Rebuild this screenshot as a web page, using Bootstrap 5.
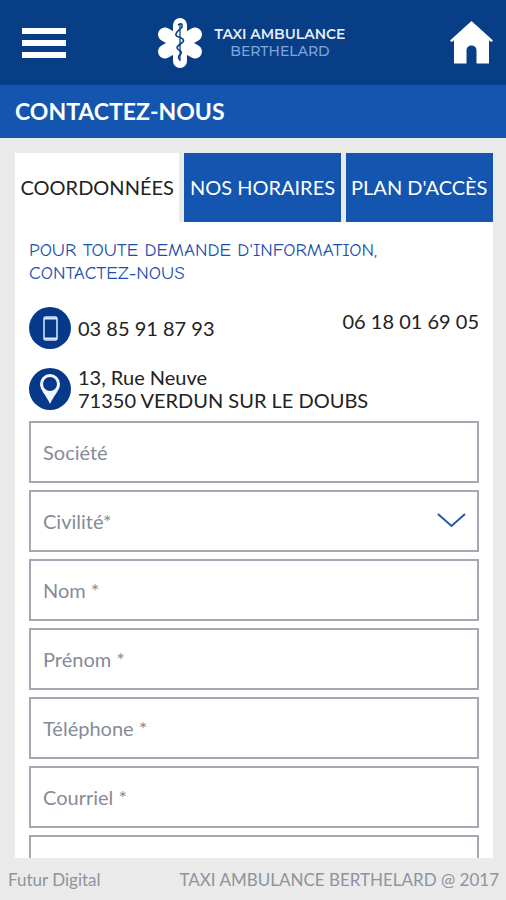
<!DOCTYPE html>
<html lang="fr">
<head>
<meta charset="utf-8">
<meta name="viewport" content="width=device-width, initial-scale=1">
<title>Taxi Ambulance Berthelard - Contactez-nous</title>
<link rel="stylesheet" href="https://cdn.jsdelivr.net/npm/bootstrap@5.3.0/dist/css/bootstrap.min.css">
<style>
:root { --navy: #083e85; --royal: #1455b0; --page: #eaeaea; }
body { font-family: Lato, sans-serif; font-size: 20px; line-height: 23px; color: #222; background: var(--page); }
.topbar { background: var(--navy); padding: 0 13px 0 22px; min-height: 85px; }
.topbar svg, .disc svg { display: block; }
.brand-link { gap: 10px; margin-right: 16px; }
.brand { color: #e6edfb; font-family: Montserrat, "Open Sans", sans-serif; font-size: 14px; font-weight: 600; line-height: 1; }
.brand-line { display: block; line-height: 17px; }
.brand-sub { color: #7da5e0; font-weight: 500; }
.page-title { background: var(--royal); color: #fff; font-size: 23px; font-weight: 700; line-height: 29px; padding: 12px 15px; }
.content { overflow-y: auto; scrollbar-width: none; min-height: 0; padding: 15px 13px 0 15px; }
.content::-webkit-scrollbar { display: none; }
.tabs { background: var(--page); gap: 5px; }
.tab { border: 0; background: var(--royal); color: #fff; font-size: 20px; line-height: 29px; padding: 20px 5px; white-space: nowrap; }
.tab.active { background: #fff; color: #222; }
.panel { padding: 17px 14px; }
.intro { color: #1a4fae; font-family: "Comic Neue", "Patrick Hand", Lato, cursive; font-size: 19px; line-height: 23px; }
.disc { width: 42px; height: 42px; background: #07398a; border-radius: 50%; }
.phones { padding-top: 22px; }
.phone-alt { padding-top: 3px; }
.contact-row { gap: 7px; }
.place { padding: 17px 0 9px; }
.fields { gap: 7px; }
.field { height: 62px; border: 2px solid #a5a7b2; border-radius: 0; font-size: 20px; padding: 0 12px; color: #868b98; background-color: #fff; }
.field::placeholder { color: #868b98; opacity: 1; }
.picker select { appearance: none; background-image: none; }
.picker svg { position: absolute; right: 13px; top: 23px; pointer-events: none; }
.footbar { color: #8f939d; font-size: 17px; line-height: 22px; padding: 11px 7px 9px 8px; }
</style>
<script src="https://cdn.jsdelivr.net/npm/bootstrap@5.3.0/dist/js/bootstrap.bundle.min.js"></script>
</head>
<body class="vh-100 d-flex flex-column overflow-hidden">
<header class="topbar d-flex align-items-center justify-content-between">
  <button type="button" class="btn p-0 border-0" aria-label="Menu">
    <svg width="44" height="30" viewBox="0 0 44 30" fill="#fff"><path d="M0 0h44v6H0zM0 12h44v6H0zM0 24h44v6H0z"/></svg>
  </button>
  <a href="#" class="brand-link d-flex align-items-center text-decoration-none">
    <svg width="50" height="52" viewBox="0 0 50 52">
      <g stroke="#fff" stroke-width="14" stroke-linecap="round"><path d="M25 8v36M10 17.500l30 17M40 17.500l-30 17"/></g>
      <path d="M25 8v36" stroke="#345a96" stroke-width="1.500"/>
      <path d="M23 8q5-3 4 2l-5 5q-3 4 2 5 6 2 4 5l-4 3q-4 3 0 5 4 2 1 5-3 2 0 5" fill="none" stroke="#083e85" stroke-width="1.600"/>
    </svg>
    <span class="brand text-center"><span class="brand-line">TAXI AMBULANCE</span><span class="brand-line brand-sub">BERTHELARD</span></span>
  </a>
  <a href="#" aria-label="Accueil">
    <svg width="43" height="43" viewBox="0 0 43 43" fill="#fff"><path d="M21.500 0L43 19.500 41.500 21 39 19.500V42.500H26.500V29Q26 24.500 21.500 24.500T16.500 29V42.500H4V19.500L1.500 21 0 19.500Z"/></svg>
  </a>
</header>
<h1 class="page-title m-0">CONTACTEZ-NOUS</h1>
<main class="content flex-grow-1">
  <div class="tabs d-flex" role="tablist">
    <button class="tab active flex-fill" type="button" role="tab" aria-selected="true">COORDONNÉES</button>
    <button class="tab flex-fill" type="button" role="tab" aria-selected="false">NOS HORAIRES</button>
    <button class="tab flex-fill" type="button" role="tab" aria-selected="false">PLAN D'ACCÈS</button>
  </div>
  <section class="panel bg-white">
    <p class="intro mb-0">POUR TOUTE DEMANDE D'INFORMATION, CONTACTEZ-NOUS</p>
    <div class="phones d-flex justify-content-between">
      <div class="contact-row d-flex align-items-center">
        <span class="disc d-flex align-items-center justify-content-center">
          <svg width="15" height="25" viewBox="0 0 15 25"><rect x="1" y="1" width="13" height="23" rx="2" fill="none" stroke="#dce8ff" stroke-width="1.500"/><path d="M1 2.500h13M1 22.500h13" stroke="#dce8ff" stroke-width="2"/></svg>
        </span>
        <a class="text-decoration-none text-reset" href="tel:0385918793">03 85 91 87 93</a>
      </div>
      <a class="phone-alt text-decoration-none text-reset" href="tel:0618016905">06 18 01 69 05</a>
    </div>
    <div class="place contact-row d-flex align-items-center">
      <span class="disc d-flex align-items-center justify-content-center">
        <svg width="20" height="30" viewBox="0 0 20 30"><path fill="#f1f6ff" fill-rule="evenodd" d="M10 0a10 10 0 0 1 10 10c0 6-6 11-10 20C6 21 0 16 0 10A10 10 0 0 1 10 0zm0 3a7 7 0 1 0 0 14 7 7 0 0 0 0-14z"/></svg>
      </span>
      <span>13, Rue Neuve<br>71350 VERDUN SUR LE DOUBS</span>
    </div>
    <form class="fields d-flex flex-column">
      <input class="form-control field" type="text" placeholder="Société" aria-label="Société">
      <div class="picker position-relative">
        <select class="form-select field" aria-label="Civilité"><option>Civilité*</option></select>
        <svg width="29" height="15" viewBox="0 0 29 15" fill="none" stroke="#245aa8" stroke-width="2"><path d="M1 1l13.500 12L28 1"/></svg>
      </div>
      <input class="form-control field" type="text" placeholder="Nom *" aria-label="Nom">
      <input class="form-control field" type="text" placeholder="Prénom *" aria-label="Prénom">
      <input class="form-control field" type="tel" placeholder="Téléphone *" aria-label="Téléphone">
      <input class="form-control field" type="email" placeholder="Courriel *" aria-label="Courriel">
      <input class="form-control field" type="text" aria-label="Date">
    </form>
  </section>
</main>
<footer class="footbar d-flex justify-content-between">
  <span>Futur Digital</span>
  <span>TAXI AMBULANCE BERTHELARD @ 2017</span>
</footer>
</body>
</html>
